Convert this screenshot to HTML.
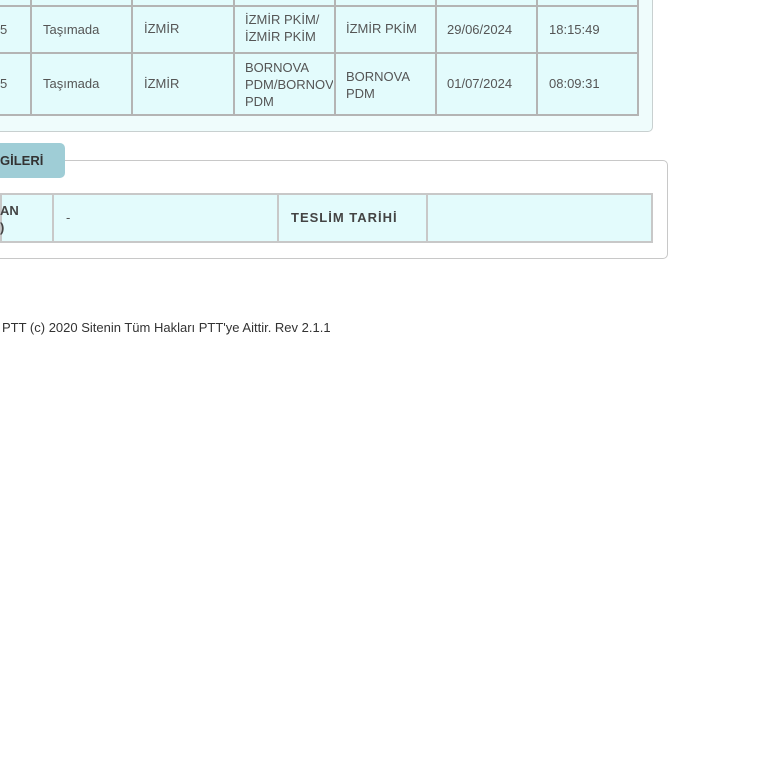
<!DOCTYPE html>
<html><head><meta charset="utf-8"><style>
body{margin:0;width:768px;height:768px;background:#fff;position:relative;overflow:hidden;font-family:"Liberation Sans","DejaVu Sans",sans-serif;color:#555}
.abs{position:absolute}
.p1{left:-10px;top:-10px;width:661px;height:140px;background:#effcfc;border:1px solid #c8d0d0;border-radius:5px}
.cell{position:absolute;background:#e3fbfc;box-sizing:border-box;font-size:13px;color:#555;display:flex;align-items:center;line-height:16px}
.vl{position:absolute;width:2px;background:#b4b4b4}
.hl{position:absolute;height:2px;background:#b4b4b4}
.p2{left:-10px;top:160px;width:676px;height:97px;border:1px solid #c8c8c8;border-radius:5px;background:#fff}
.tab{left:-10px;top:143px;width:75px;height:35px;background:#9fcdd6;border-radius:5px;font-weight:bold;font-size:13px;color:#333;display:flex;align-items:center;padding-left:10px;box-sizing:border-box}
</style></head><body>
<div class="abs p1"></div>
<div class="cell" style="left:0;top:0;width:638px;height:115px"></div>
<div class="hl" style="left:0;top:5px;width:639px"></div>
<div class="hl" style="left:0;top:52px;width:639px"></div>
<div class="hl" style="left:0;top:114px;width:639px"></div>
<div class="vl" style="left:30px;top:0;height:116px"></div>
<div class="vl" style="left:131px;top:0;height:116px"></div>
<div class="vl" style="left:233px;top:0;height:116px"></div>
<div class="vl" style="left:334px;top:0;height:116px"></div>
<div class="vl" style="left:435px;top:0;height:116px"></div>
<div class="vl" style="left:536px;top:0;height:116px"></div>
<div class="vl" style="left:637px;top:0;height:116px"></div>
<div class="abs" style="left:0;top:22px;font-size:13px">5</div>
<div class="abs" style="left:0;top:76px;font-size:13px">5</div>
<div class="abs" style="left:43px;top:22px;font-size:13px">Taşımada</div>
<div class="abs" style="left:43px;top:76px;font-size:13px">Taşımada</div>
<div class="abs" style="left:144px;top:21px;font-size:13px">İZMİR</div>
<div class="abs" style="left:144px;top:76px;font-size:13px">İZMİR</div>
<div class="abs" style="left:245px;top:11px;font-size:13px;line-height:17px">İZMİR PKİM/<br>İZMİR PKİM</div>
<div class="abs" style="left:245px;top:59px;font-size:13px;line-height:17px;width:88px;overflow:hidden;white-space:nowrap">BORNOVA<br>PDM/BORNOVA<br>PDM</div>
<div class="abs" style="left:346px;top:21px;font-size:13px">İZMİR PKİM</div>
<div class="abs" style="left:346px;top:68px;font-size:13px;line-height:17px">BORNOVA<br>PDM</div>
<div class="abs" style="left:447px;top:22px;font-size:13px">29/06/2024</div>
<div class="abs" style="left:447px;top:76px;font-size:13px">01/07/2024</div>
<div class="abs" style="left:549px;top:22px;font-size:13px">18:15:49</div>
<div class="abs" style="left:549px;top:76px;font-size:13px">08:09:31</div>

<div class="abs p2"></div>
<div class="abs tab" style="padding-left:10px">GİLERİ</div>
<div class="cell" style="left:0;top:193px;width:653px;height:50px;border:2px solid #c8c8c8"></div>
<div class="vl" style="left:52px;top:193px;height:50px;background:#c8c8c8"></div>
<div class="vl" style="left:277px;top:193px;height:50px;background:#c8c8c8"></div>
<div class="vl" style="left:426px;top:193px;height:50px;background:#c8c8c8"></div>
<div class="abs" style="left:0;top:202px;font-size:13px;font-weight:bold;color:#444;line-height:17px">AN<br>)</div>
<div class="abs" style="left:66px;top:210px;font-size:13px">-</div>
<div class="abs" style="left:291px;top:210px;font-size:13px;font-weight:bold;color:#444;letter-spacing:1px">TESLİM TARİHİ</div>
<div class="abs" style="left:2px;top:320px;font-size:13px;color:#333">PTT (c) 2020 Sitenin Tüm Hakları PTT'ye Aittir. Rev 2.1.1</div>
</body></html>
